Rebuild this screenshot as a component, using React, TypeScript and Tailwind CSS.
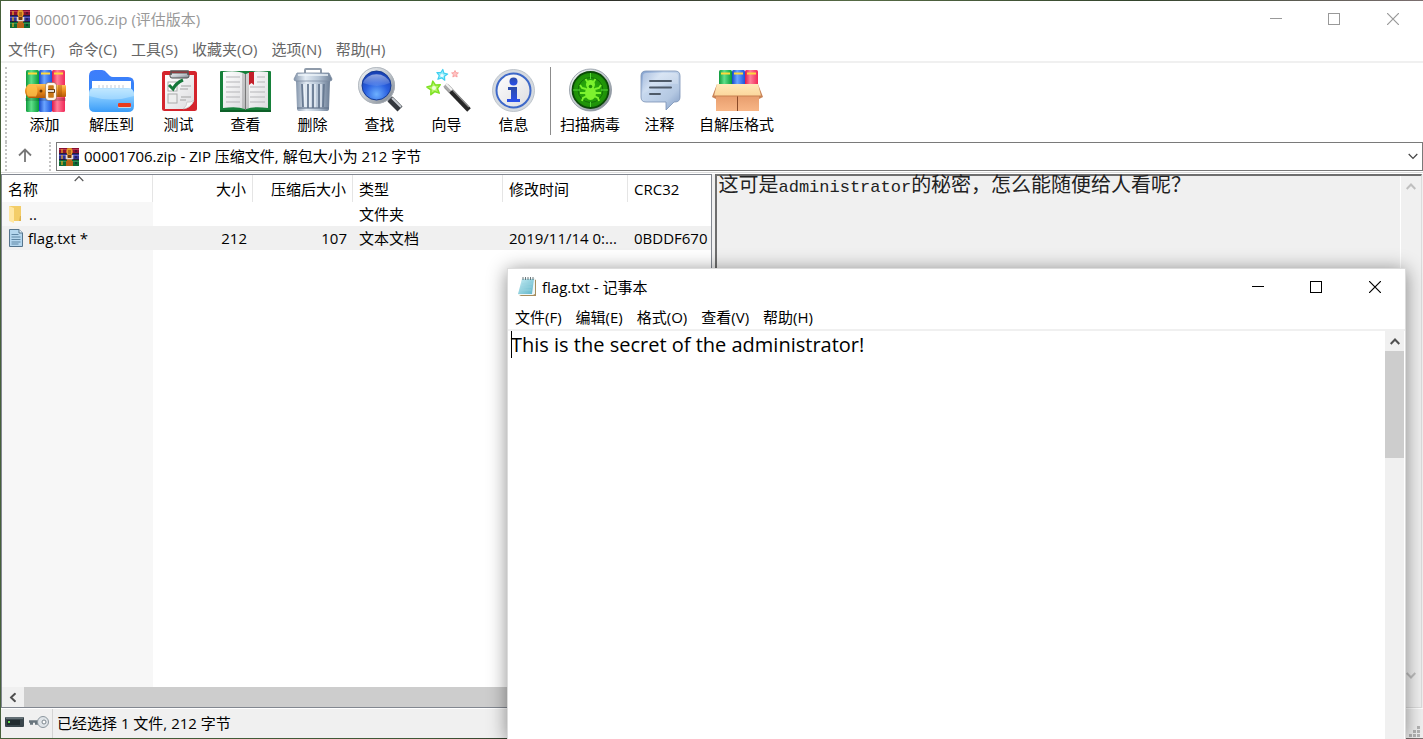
import type { ReactNode } from "react";

function ArchiveIcon() {
  return (
    <svg width="20" height="18" viewBox="0 0 20 18" className="shrink-0" aria-hidden="true">
      <rect width="20" height="18" fill="#241c38" />
      <rect width="20" height="5" fill="#8c1030" />
      <rect y="1" width="20" height="1" fill="#b83a58" />
      <rect y="6" width="20" height="5" fill="#2f3192" />
      <rect y="7" width="20" height="1" fill="#5c60c0" />
      <rect y="12" width="20" height="6" fill="#0f6b35" />
      <rect y="13" width="20" height="1" fill="#2f9258" />
      <path d="M3 1v4M3 7v4M3 13v4" stroke="#f2b01e" strokeWidth="1.2" />
      <path d="M17 2v2M17 8v2M17 14v2" stroke="#1a1030" strokeWidth="2" opacity=".5" />
      <rect x="8" y="0" width="5" height="18" fill="#b9681c" />
      <circle cx="10.500" cy="3.500" r="3.200" fill="#e89c2c" />
      <path d="M9 3h3M9 5h3" stroke="#7a4208" />
      <path d="M7.500 7v3.500h6V7" fill="none" stroke="#dedad6" strokeWidth="1.600" />
      <rect x="9" y="7" width="3" height="3" fill="#6b3c12" />
      <rect x="7" y="13" width="7" height="5" fill="#b96318" />
    </svg>
  );
}

function Drawing({ children }: { children: ReactNode }) {
  return (
    <svg width="56" height="47" viewBox="0 0 56 47" className="shrink-0" aria-hidden="true">
      {children}
    </svg>
  );
}

function Gradients() {
  return (
    <svg width="0" height="0" className="absolute" aria-hidden="true">
      <defs>
        <linearGradient id="green"><stop offset="0" stopColor="#0f9a3c" /><stop offset=".4" stopColor="#5fe08a" /><stop offset="1" stopColor="#079a38" /></linearGradient>
        <linearGradient id="blue"><stop offset="0" stopColor="#1747c8" /><stop offset=".4" stopColor="#6ba5ff" /><stop offset="1" stopColor="#1c55dc" /></linearGradient>
        <linearGradient id="pink"><stop offset="0" stopColor="#e01848" /><stop offset=".4" stopColor="#ff7f98" /><stop offset="1" stopColor="#f02858" /></linearGradient>
        <linearGradient id="belt" x2="0" y2="1"><stop offset="0" stopColor="#ffc35a" /><stop offset=".5" stopColor="#e98a1c" /><stop offset="1" stopColor="#b55a08" /></linearGradient>
        <linearGradient id="folderBack" x2="0" y2="1"><stop offset="0" stopColor="#3f7dfb" /><stop offset="1" stopColor="#2f86f8" /></linearGradient>
        <linearGradient id="folderFront" x2="0" y2="1"><stop offset="0" stopColor="#b5e2ff" /><stop offset=".35" stopColor="#84caff" /><stop offset="1" stopColor="#3a9cf8" /></linearGradient>
        <linearGradient id="paper" x2="1" y2="1"><stop offset="0" stopColor="#ffffff" /><stop offset="1" stopColor="#dcdcdf" /></linearGradient>
        <linearGradient id="can"><stop offset="0" stopColor="#8495ab" /><stop offset=".3" stopColor="#e2ebf4" /><stop offset=".65" stopColor="#b4c3d4" /><stop offset="1" stopColor="#6c7e95" /></linearGradient>
        <linearGradient id="metal" x2="1" y2="1"><stop offset="0" stopColor="#f4f6f8" /><stop offset=".5" stopColor="#c2c8ce" /><stop offset="1" stopColor="#747c86" /></linearGradient>
        <radialGradient id="lens" cx=".5" cy=".8" r=".8"><stop offset="0" stopColor="#6db0ff" /><stop offset=".5" stopColor="#2a60e0" /><stop offset="1" stopColor="#163cae" /></radialGradient>
        <linearGradient id="gloss" x2="0" y2="1"><stop offset="0" stopColor="#fff" stopOpacity=".65" /><stop offset="1" stopColor="#fff" stopOpacity=".1" /></linearGradient>
        <linearGradient id="infoBlue" x2="0" y2="1"><stop offset="0" stopColor="#2c4ca8" /><stop offset="1" stopColor="#2a50ec" /></linearGradient>
        <radialGradient id="virus"><stop offset="0" stopColor="#2fb80c" /><stop offset="1" stopColor="#1c8c08" /></radialGradient>
        <linearGradient id="bubble" x2="1" y2="1"><stop offset="0" stopColor="#7d9ccc" /><stop offset=".3" stopColor="#c8d9ef" /><stop offset=".7" stopColor="#b4c8e2" /><stop offset="1" stopColor="#7c98c2" /></linearGradient>
        <linearGradient id="box" x2="0" y2="1"><stop offset="0" stopColor="#e59a6a" /><stop offset="1" stopColor="#f8b686" /></linearGradient>
        <linearGradient id="flap" x2="0" y2="1"><stop offset="0" stopColor="#ffe8b8" /><stop offset="1" stopColor="#fbd69c" /></linearGradient>
        <linearGradient id="note" x2="1" y2="1"><stop offset="0" stopColor="#c6edf4" /><stop offset="1" stopColor="#5eb4c8" /></linearGradient>
      </defs>
    </svg>
  );
}

const AddIcon = (
  <Drawing>
    <rect x="9" y="3" width="13" height="42" rx="1.5" fill="url(#green)" />
    <rect x="22" y="3" width="13" height="42" rx="1.5" fill="url(#blue)" />
    <rect x="35" y="3" width="13" height="42" rx="1.5" fill="url(#pink)" />
    <path d="M11 6.500h9M24 6.500h9M37 6.500h9" stroke="#ffd83a" strokeWidth="2" />
    <rect x="8" y="31" width="41" height="3" fill="#000" opacity=".15" />
    <path d="M12 17h19v14H12q-4-3-4-7t4-7z" fill="url(#belt)" />
    <path d="M11 18.500h8q3 5.500 0 11h-8q-3-5 0-11z" fill="#ffc24c" opacity=".8" />
    <rect x="31" y="18" width="18" height="12" rx="1" fill="url(#belt)" />
    <path d="M42 18v12M44 18v12" stroke="#a24d05" strokeWidth=".8" />
    <circle cx="24" cy="24" r="1.500" fill="#6a3502" />
    <rect x="30" y="17" width="8" height="15" rx="2" fill="#c97818" stroke="#fff5e8" strokeWidth="2.400" />
    <rect x="28.500" y="15.500" width="11" height="18" rx="3" fill="none" stroke="#94785c" strokeWidth=".6" />
    <path d="M31 24h7" stroke="#5a3008" strokeWidth="3.500" />
    <path d="M30 24h7" stroke="#eee" strokeWidth="1.800" />
  </Drawing>
);

const ExtractIcon = (
  <Drawing>
    <path d="M5 9q0-6 6-6h7q3 0 5 3l3 3q1 1 3 1h15q6 0 6 6v16H5z" fill="url(#folderBack)" />
    <path d="M8 14h39v14H8z" fill="#fff" />
    <path d="M15 18v5M19 18v5M23 18v5M27 18v5M31 18v5M35 18v5M39 18v5" stroke="#c6ccd5" />
    <path d="M5 26q0-5 5-5h34q5 0 6 5v13q0 6-6 6H11q-6 0-6-6z" fill="url(#folderFront)" />
    <path d="M5 29q23 7 45 0v-3q-1-4-5-4H10q-4 0-5 4z" fill="#d8f2ff" opacity=".4" />
    <rect x="34" y="36" width="13" height="5" rx="1" fill="#c8d8e4" />
    <rect x="34" y="36" width="13" height="4" rx="1" fill="#ea3a1e" />
  </Drawing>
);

const TestIcon = (
  <Drawing>
    <rect x="11" y="4" width="35" height="40" rx="2.500" fill="#d4242c" />
    <path d="M14 8h29v26q-3 7-11 8H14z" fill="url(#paper)" />
    <path d="M43 33q-3 8-11 9 4-3 4-7 4 1 7-2z" fill="#f8f8f8" stroke="#bbb" strokeWidth=".6" />
    <rect x="19" y="6" width="19" height="5" rx="2" fill="url(#metal)" stroke="#505050" />
    <path d="M20 8V4h17v4" fill="none" stroke="#555" strokeWidth="1.500" />
    <rect x="17" y="15" width="9" height="9" fill="#fff" stroke="#aaa" />
    <rect x="17" y="27" width="9" height="9" fill="#eee" stroke="#aaa" />
    <path d="M18 18l4 4q3-6 10-9" fill="none" stroke="#15783a" strokeWidth="3" />
    <path d="M30 19h10M29 22h8M30 30h10M29 33h6" stroke="#a3a3a3" />
  </Drawing>
);

const ViewIcon = (
  <Drawing>
    <rect x="2" y="4" width="51" height="41" rx="1" fill="#16803a" />
    <path d="M2 43h51v2H2z" fill="#0d5f28" />
    <path d="M5 5q15-2 22 2v35q-8-3-22-1z" fill="url(#paper)" />
    <path d="M50 5q-15-2-22 2v35q8-3 22-1z" fill="url(#paper)" />
    <path d="M24 6l3 1v35l-3-1zM28 7l3-1v35l-3 1z" fill="#555" opacity=".25" />
    <path d="M27.500 7v36" stroke="#777" />
    <path d="M8 10h14M8 15h14M8 20h14M8 25h14M8 30h14M8 35h14M39 10h8M39 15h8M32 20h15M32 25h15M32 30h15M32 35h15" stroke="#b5b5b8" />
    <path d="M31 5h5v13l-2.500-2-2.500 2z" fill="#c41f2a" />
  </Drawing>
);

const DeleteIcon = (
  <Drawing>
    <path d="M20 7V3q0-1 1-1h14q1 0 1 1v4" fill="none" stroke="#8f9baa" strokeWidth="2" />
    <path d="M11 14h34l-1 28q0 2-3 2H15q-3 0-3-2z" fill="url(#can)" />
    <path d="M17 17l1 23M23 17v24M28 17v24M34 17v24M39 17l-1 23" stroke="#687a92" strokeWidth="1.800" />
    <path d="M19 17l1 23M25 17v24M30 17v24M36 17v24" stroke="#eef4fa" strokeWidth="1.200" />
    <path d="M12 6h32l3 6q0 2-2 2H11q-2 0-2-2z" fill="url(#can)" stroke="#7d8da2" strokeWidth=".8" />
    <path d="M13 8h30" stroke="#eef4fa" strokeWidth="1.500" />
    <path d="M12 41h32" stroke="#64758b" strokeWidth="1.200" />
  </Drawing>
);

const FindIcon = (
  <Drawing>
    <path d="M35 29l4 4" stroke="#8c939b" strokeWidth="6" />
    <path d="M38 32l10 10" stroke="#34383e" strokeWidth="7" />
    <path d="M40 31l9 9" stroke="#c9ced4" strokeWidth="2" />
    <circle cx="24.500" cy="18.500" r="18.500" fill="url(#metal)" />
    <circle cx="24.500" cy="18.500" r="18" fill="none" stroke="#a9b0b8" strokeWidth=".8" />
    <circle cx="24.500" cy="18.500" r="14.500" fill="url(#lens)" stroke="#163b94" />
    <path d="M11 16a14 12 0 0 1 27 0q-13 6-27 0z" fill="url(#gloss)" opacity=".8" />
  </Drawing>
);

const star = "M0-7l2 4.400 4.800.4-3.500 3.400 1 4.800L0 3.600-4.300 6l1-4.800-3.500-3.400 4.800-.4z";
const WizardIcon = (
  <Drawing>
    <path d="M27 19l23 24" stroke="#262626" strokeWidth="5" />
    <path d="M29 18l21 22" stroke="#8f8f8f" strokeWidth="1.400" />
    <path d="M26 18l6 6" stroke="#a9a9a9" strokeWidth="5" />
    <path d="M27 17l6 6" stroke="#f3f3f3" strokeWidth="2" />
    <path d={star} transform="translate(15 21) rotate(-10)" fill="#b6f56a" stroke="#7fe224" strokeWidth="1.500" strokeLinejoin="round" />
    <circle cx="15" cy="21" r="2" fill="#efffdc" />
    <path d={star} transform="translate(23 8) rotate(8) scale(.8)" fill="#96ecfa" stroke="#3fd0f0" strokeWidth="1.500" strokeLinejoin="round" />
    <circle cx="23" cy="8.500" r="1.600" fill="#ecfcff" />
    <path d={star} transform="translate(36 7) scale(.5)" fill="#ffc4c4" stroke="#f89494" strokeWidth="1.600" strokeLinejoin="round" />
  </Drawing>
);

const InfoIcon = (
  <Drawing>
    <circle cx="27.500" cy="23.500" r="21" fill="#d5dae0" stroke="#b3bac2" strokeWidth=".8" />
    <circle cx="27.500" cy="23.500" r="17" fill="url(#paper)" stroke="#3d68c8" strokeWidth="2" />
    <circle cx="27.500" cy="14.500" r="4" fill="url(#infoBlue)" />
    <path d="M22 20h9v12h3v3H21v-3h4v-9h-3z" fill="url(#infoBlue)" />
  </Drawing>
);

const ScanIcon = (
  <Drawing>
    <circle cx="28.500" cy="23" r="21" fill="url(#metal)" stroke="#8a949e" strokeWidth=".8" />
    <circle cx="28.500" cy="23" r="18" fill="url(#virus)" stroke="#0b4a08" strokeWidth="1.800" />
    <circle cx="28.500" cy="23" r="12.500" fill="none" stroke="#0e6408" strokeWidth=".8" />
    <path d="M28.500 6v6M28.500 35v5M11 23h7M39 23h7" stroke="#55d838" />
    <ellipse cx="28.500" cy="26" rx="5.500" ry="7" fill="#7cf22e" />
    <circle cx="28.500" cy="17.500" r="4.500" fill="#7cf22e" />
    <circle cx="28.500" cy="19.500" r="1.800" fill="#208c0a" />
    <path d="M25.500 15l-2-3M31.500 15l2-3M24 22l-4-1-2-3M33 22l4-1 2-3M24 26h-6M33 26h6M25 29l-4 2-1 3M32 29l4 2 1 3" fill="none" stroke="#7cf22e" strokeWidth="1.900" />
  </Drawing>
);

const CommentIcon = (
  <Drawing>
    <path d="M14 4h29q5 0 5 5v21q0 5-5 5h-1l-8 8v-8H14q-5 0-5-5V9q0-5 5-5z" fill="url(#bubble)" stroke="#7990b4" strokeWidth=".8" />
    <path d="M14 6h29q3 0 3 3v8Q30 15 11 27V9q0-3 3-3z" fill="url(#gloss)" opacity=".5" />
    <path d="M18 14h21M18 20.500h21M18 27h10" stroke="#4d5968" strokeWidth="2" strokeLinecap="round" />
  </Drawing>
);

const SfxIcon = (
  <Drawing>
    <rect x="10" y="3" width="13" height="20" rx="1.500" fill="url(#green)" />
    <rect x="23" y="3" width="13" height="20" rx="1.500" fill="url(#blue)" />
    <rect x="36" y="3" width="13" height="20" rx="1.500" fill="url(#pink)" />
    <path d="M12 6.500h9M25 6.500h9M38 6.500h9" stroke="#ffd83a" strokeWidth="2" />
    <path d="M8 17L3 30l4 2zM49 17l5 13-4 2z" fill="#c98458" />
    <rect x="7" y="27" width="43" height="17" fill="url(#box)" />
    <path d="M28.500 29v15" stroke="#8a4a28" />
    <path d="M8 17h41l3 12H5z" fill="url(#flap)" />
    <path d="M5 29h47" stroke="#c98150" />
  </Drawing>
);

const tools = [
  { label: "添加", icon: AddIcon },
  { label: "解压到", icon: ExtractIcon },
  { label: "测试", icon: TestIcon },
  { label: "查看", icon: ViewIcon },
  { label: "删除", icon: DeleteIcon },
  { label: "查找", icon: FindIcon },
  { label: "向导", icon: WizardIcon },
  { label: "信息", icon: InfoIcon },
];

const extraTools = [
  { label: "扫描病毒", icon: ScanIcon },
  { label: "注释", icon: CommentIcon },
  { label: "自解压格式", icon: SfxIcon },
];

function ToolButton({ label, icon }: { label: string; icon: ReactNode }) {
  return (
    <button type="button" className="flex min-w-[67px] flex-col items-center px-1 leading-5 whitespace-nowrap">
      {icon}
      {label}
    </button>
  );
}

function WindowButtons() {
  return (
    <div className="flex">
      <button type="button" aria-label="最小化" className="flex h-9 w-[58px] items-center justify-center">
        <svg width="12" height="12" viewBox="0 0 12 12" shapeRendering="crispEdges"><path d="M0 5.500h12" stroke="currentColor" /></svg>
      </button>
      <button type="button" aria-label="最大化" className="flex h-9 w-[58px] items-center justify-center">
        <svg width="12" height="12" viewBox="0 0 12 12" shapeRendering="crispEdges"><path d="M.5.5h11v11H.5z" fill="none" stroke="currentColor" /></svg>
      </button>
      <button type="button" aria-label="关闭" className="flex h-9 w-[60px] items-center justify-center">
        <svg width="12" height="12" viewBox="0 0 12 12"><path d="M0 0l12 12M12 0L0 12" stroke="currentColor" strokeWidth="1.200" /></svg>
      </button>
    </div>
  );
}

function Chevron({ className, thin }: { className?: string; thin?: boolean }) {
  return (
    <svg width="10" height="7" viewBox="0 0 10 7" className={className} aria-hidden="true">
      <path d="M.7 6L5 1.500 9.300 6" fill="none" stroke="currentColor" strokeWidth={thin ? 1.2 : 2} />
    </svg>
  );
}

function MenuBar({ items, label }: { items: string[]; label: string }) {
  return (
    <nav aria-label={label} className="flex h-6 items-center gap-3.5 px-[7px]">
      {items.map((item) => (
        <button type="button" key={item} className="leading-6 whitespace-nowrap">{item}</button>
      ))}
    </nav>
  );
}

function FileList() {
  const head = "h-[27px] border-r border-[#e5e5e5] px-1.5 font-normal whitespace-nowrap";
  const cell = "h-6 overflow-hidden px-1.5 whitespace-nowrap";
  return (
    <section className="flex w-1/2 flex-col border border-[#828790] bg-white">
      <div className="flex-1 overflow-hidden bg-[linear-gradient(to_right,#f7f7f7_151px,#fff_151px)]">
        <table className="w-full table-fixed border-separate border-spacing-0 leading-6">
          <colgroup>
            <col className="w-[151px]" />
            <col className="w-[100px]" />
            <col className="w-[100px]" />
            <col className="w-[150px]" />
            <col className="w-[125px]" />
            <col />
          </colgroup>
          <thead className="bg-white text-left">
            <tr>
              <th className={head}>
                <div className="relative">
                  名称
                  <Chevron thin className="absolute -top-0.5 left-[66px] text-[#555]" />
                </div>
              </th>
              <th className={head + " text-right"}>大小</th>
              <th className={head + " text-right"}>压缩后大小</th>
              <th className={head}>类型</th>
              <th className={head}>修改时间</th>
              <th className="h-[27px] px-1.5 font-normal">CRC32</th>
            </tr>
          </thead>
          <tbody>
            <tr>
              <td className={cell}>
                <div className="flex items-center gap-1.5">
                  <svg width="15" height="18" viewBox="0 0 15 18" aria-hidden="true">
                    <path d="M1 1h12v15H1z" fill="#f3cd68" />
                    <path d="M1 1l5 2v15l-5-2z" fill="#ffe7a3" />
                    <path d="M12 11h1v5h-2z" fill="#dcb14c" />
                  </svg>
                  ..
                </div>
              </td>
              <td className={cell} />
              <td className={cell} />
              <td className={cell}>文件夹</td>
              <td className={cell} />
              <td className={cell} />
            </tr>
            <tr className="bg-[#f0f0f0]">
              <td className={cell}>
                <div className="flex items-center gap-1">
                  <svg width="16" height="18" viewBox="0 0 16 18" aria-hidden="true">
                    <path d="M1.500.5h9.500l3.500 3.500v13.500h-13z" fill="#b4d6ee" stroke="#55748c" />
                    <path d="M11 .5V4h3.500" fill="#e8f4fb" stroke="#55748c" />
                    <path d="M3.500 5.500h7M3.500 8h9M3.500 10.500h9M3.500 13h9M3.500 15h7" stroke="#5f86a4" />
                  </svg>
                  flag.txt *
                </div>
              </td>
              <td className={cell + " text-right"}>212</td>
              <td className={cell + " text-right"}>107</td>
              <td className={cell}>文本文档</td>
              <td className={cell}>2019/11/14 0:...</td>
              <td className={cell}>0BDDF670</td>
            </tr>
          </tbody>
        </table>
      </div>
      <div className="flex h-5 bg-[#f0f0f0]">
        <button type="button" aria-label="向左滚动" className="flex w-[22px] items-center justify-center text-[#505050]">
          <Chevron className="-rotate-90" />
        </button>
        <div className="flex-1 bg-[#cdcdcd]" />
      </div>
    </section>
  );
}

function Notepad() {
  return (
    <section
      aria-label="记事本"
      className="absolute top-[268px] right-[17px] bottom-0 left-[507px] flex flex-col border border-b-0 border-[#dcdcdc] bg-white text-black shadow-[0_2px_18px_rgba(0,0,0,0.45)]"
    >
      <header className="flex items-center justify-between pl-[9px]">
        <h2 className="flex items-center gap-[5px]">
          <svg width="20" height="20" viewBox="0 0 20 20" aria-hidden="true">
            <path d="M17 2l2 1v16H4l-2-1z" fill="#a58c5c" />
            <path d="M5 1h13v16l-2 1H1z" fill="#eef6f6" />
            <path d="M5 2h12l-2 15H1z" fill="url(#note)" />
            <path d="M5 7h10M4.500 10h10M4 13h10" stroke="#9bd3e0" strokeWidth=".7" />
            <path d="M6 0v3M8.500 0v3M11 0v3M13.500 0v3M16 0v3" stroke="#5b6a6e" strokeWidth=".9" />
          </svg>
          flag.txt - 记事本
        </h2>
        <WindowButtons />
      </header>
      <MenuBar label="记事本菜单" items={["文件(F)", "编辑(E)", "格式(O)", "查看(V)", "帮助(H)"]} />
      <div className="relative flex min-h-0 flex-1 border-t-2 border-[#f0f0f0]">
        <textarea
          aria-label="文本内容"
          className="min-w-0 flex-1 resize-none overflow-hidden pl-[3px] text-xl leading-7 outline-none"
          defaultValue="This is the secret of the administrator!"
        />
        <span className="absolute top-0 left-[3px] h-[27px] w-px bg-black" />
        <div className="mr-px flex w-[19px] flex-col bg-[#f0f0f0]">
          <button type="button" aria-label="向上滚动" className="flex h-5 items-center justify-center text-[#505050]">
            <Chevron />
          </button>
          <div className="h-[107px] bg-[#cdcdcd]" />
        </div>
      </div>
    </section>
  );
}

export default function App() {
  return (
    <div className="relative h-screen overflow-hidden bg-[linear-gradient(to_right,#46603a,#3f5836_30%,#2c2d28_42%,#566b45_60%,#33442c_80%,#7c6f70)] pt-px pb-px pl-px font-['Open_Sans','Noto_Sans_CJK_SC',sans-serif] text-[15px] text-black">
      <Gradients />
      <main className="flex h-full flex-col bg-white">
        <header className="flex h-9 items-center justify-between pl-[9px] text-[#999]">
          <h1 className="flex items-center gap-[5px]">
            <ArchiveIcon />
            00001706.zip (评估版本)
          </h1>
          <WindowButtons />
        </header>
        <div className="border-b-2 border-[#f0f0f0] text-[#666]">
          <MenuBar label="主菜单" items={["文件(F)", "命令(C)", "工具(S)", "收藏夹(O)", "选项(N)", "帮助(H)"]} />
        </div>

        <div className="flex h-[79px] pt-1 pl-1">
          <div className="mr-1 h-full border-l-2 border-dotted border-[#c4c4c4]" />
          {tools.map((tool) => (
            <ToolButton key={tool.label} {...tool} />
          ))}
          <div className="mr-[5px] ml-[3px] h-[68px] w-px bg-[#8c8c8c]" />
          <div className="flex gap-0.5">
            {extraTools.map((tool) => (
              <ToolButton key={tool.label} {...tool} />
            ))}
          </div>
        </div>

        <div className="flex h-[29px] pl-1">
          <div className="border-l-2 border-dotted border-[#c4c4c4]" />
          <button type="button" aria-label="上一级" className="flex w-[42px] items-center justify-center pr-1.5 pb-1 text-[#777]">
            <svg width="14" height="14" viewBox="0 0 14 14"><path d="M7 14V1.500M1 7.500l6-6 6 6" fill="none" stroke="currentColor" strokeWidth="1.800" /></svg>
          </button>
          <div className="mr-[5px] border-l-2 border-dotted border-[#c4c4c4]" />
          <div className="relative flex flex-1 items-center border border-[#7a7a7a] pl-0.5">
            <ArchiveIcon />
            <select aria-label="路径" className="h-full flex-1 appearance-none bg-white pl-[5px] outline-none">
              <option>00001706.zip - ZIP 压缩文件, 解包大小为 212 字节</option>
            </select>
            <Chevron thin className="pointer-events-none absolute right-1 rotate-180 text-[#444]" />
          </div>
        </div>
        <div className="mt-px mb-px h-px bg-[#dcdcdc]" />

        <div className="flex min-h-0 flex-1 gap-[3px] bg-[#f0f0f0] pr-px">
          <FileList />
          <section aria-label="注释" className="flex flex-1 border-t-2 border-r border-b border-l-2 border-t-[#6e6e6e] border-r-[#dcdcdc] border-b-[#dcdcdc] border-l-[#6e6e6e] bg-[#f0f0f0]">
            <p className="flex flex-1 items-baseline pl-0.5 font-['Liberation_Mono','Noto_Sans_CJK_SC',monospace] text-xl leading-[22px] whitespace-nowrap text-[#222]">
              这可是<span className="text-[17px]">administrator</span>的秘密，怎么能随便给人看呢？
            </p>
            <div className="flex w-[21px] flex-col justify-between border-l border-white text-[#bfbfbf]">
              <button type="button" aria-label="向上滚动注释" className="flex h-5 items-center justify-center"><Chevron /></button>
              <button type="button" aria-label="向下滚动注释" className="mb-[22px] flex h-5 items-center justify-center"><Chevron className="rotate-180" /></button>
            </div>
          </section>
        </div>

        <footer className="flex h-[30px] items-center border-t border-white bg-[#f0f0f0] pl-1">
          <svg width="44" height="14" viewBox="0 0 44 14" className="mb-1" aria-hidden="true">
            <rect x="0" y="2" width="19" height="10" rx="1" fill="#39454b" />
            <path d="M1 3h17" stroke="#8d999e" />
            <rect x="2" y="5" width="13" height="5" fill="#222c30" />
            <rect x="3" y="6" width="2" height="2" fill="#5fe04a" />
            <path d="M24 6.500h11M25 8.500h3M30 8.500h3" stroke="#69757d" strokeWidth="2.500" />
            <circle cx="38" cy="7" r="5.500" fill="#dfe4e8" stroke="#8b969e" />
            <circle cx="39" cy="7" r="2" fill="#fff" stroke="#7b858c" />
          </svg>
          <div className="ml-[3px] h-full border-l border-[#d4d4d4]" />
          <span className="flex-1 pl-1">已经选择 1 文件, 212 字节</span>
          <svg width="12" height="12" viewBox="0 0 12 12" className="mr-0.5 self-end" aria-hidden="true">
            <path d="M8 0h3v3H8zM8 4h3v3H8zM4 4h3v3H4zM8 8h3v3H8zM4 8h3v3H4zM0 8h3v3H0z" fill="#b4b4b4" />
          </svg>
        </footer>
      </main>
      <Notepad />
    </div>
  );
}
